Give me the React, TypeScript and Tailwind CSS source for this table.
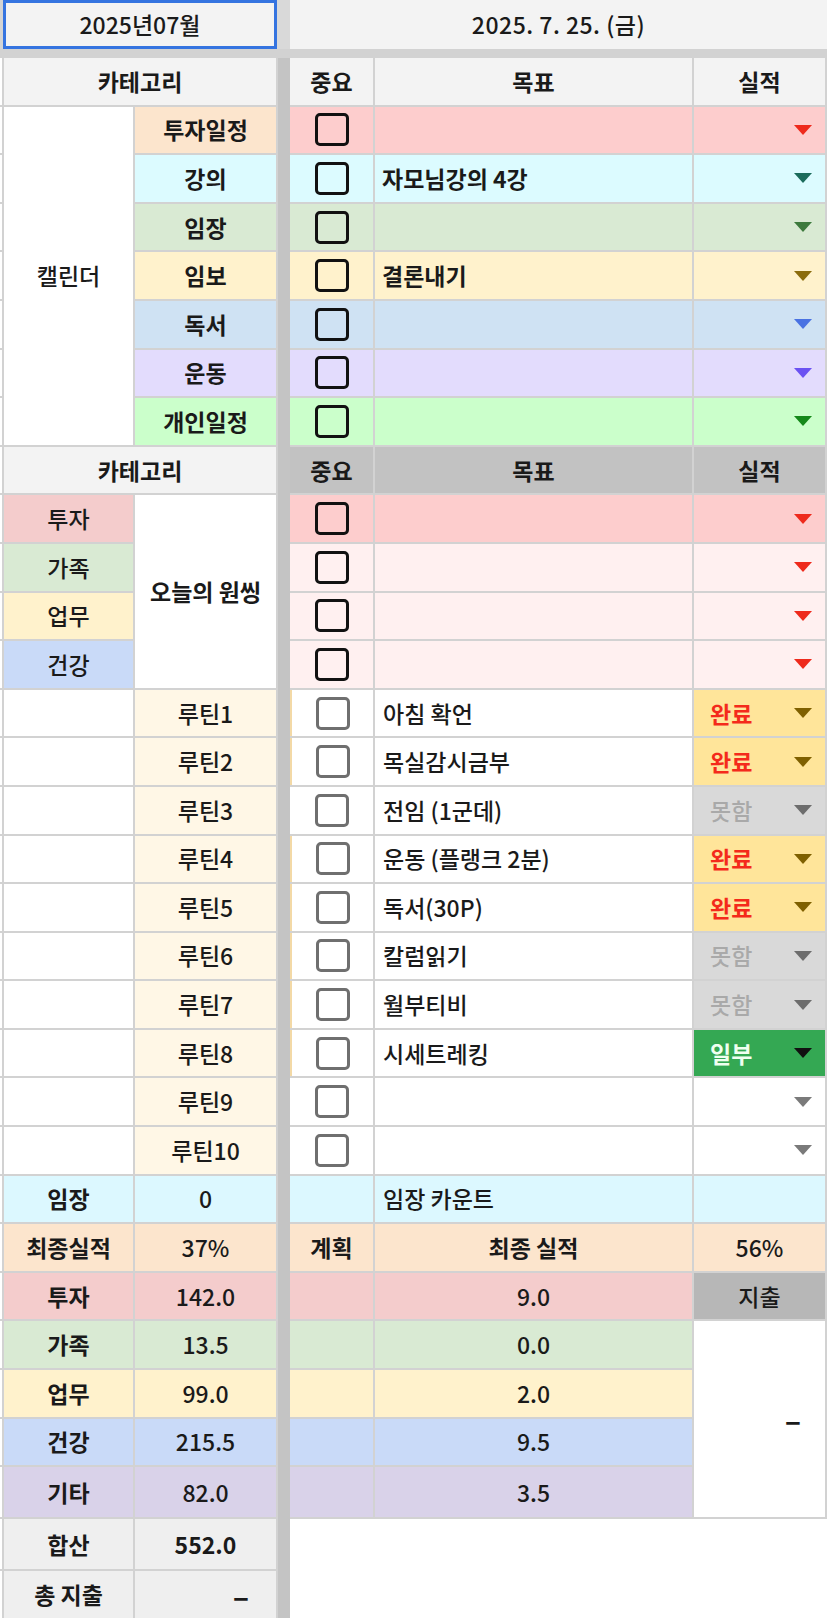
import { Fragment, type ReactNode } from "react";

type Status = "done" | "miss" | "part" | "";

const calendar = [
  { label: "투자일정", cat: "bg-[#fce5cd]", row: "bg-[#fdcdcd]", arrow: "#ee2a1c", goal: "" },
  { label: "강의", cat: "bg-[#dcfbff]", row: "bg-[#dcfbff]", arrow: "#1b6b5b", goal: "자모님강의 4강" },
  { label: "임장", cat: "bg-[#d9ead3]", row: "bg-[#d9ead3]", arrow: "#3d7a3d", goal: "" },
  { label: "임보", cat: "bg-[#fff2cc]", row: "bg-[#fff2cc]", arrow: "#8b6c0c", goal: "결론내기" },
  { label: "독서", cat: "bg-[#cfe2f3]", row: "bg-[#cfe2f3]", arrow: "#4a72e2", goal: "" },
  { label: "운동", cat: "bg-[#e3dcfd]", row: "bg-[#e3dcfd]", arrow: "#6b52f2", goal: "" },
  { label: "개인일정", cat: "bg-[#cbffcb]", row: "bg-[#cbffcb]", arrow: "#15891a", goal: "" },
];

const oneThing = [
  { label: "투자", cat: "bg-[#f4cccc]", row: "bg-[#fdcdcd]" },
  { label: "가족", cat: "bg-[#d9ead3]", row: "bg-[#fff0f0]" },
  { label: "업무", cat: "bg-[#fff2cc]", row: "bg-[#fff0f0]" },
  { label: "건강", cat: "bg-[#c9daf8]", row: "bg-[#fff0f0]" },
];

const routines: { text: string; status: Status; mark: boolean }[] = [
  { text: "아침 확언", status: "done", mark: true },
  { text: "목실감시금부", status: "done", mark: true },
  { text: "전임 (1군데)", status: "miss", mark: false },
  { text: "운동 (플랭크 2분)", status: "done", mark: true },
  { text: "독서(30P)", status: "done", mark: true },
  { text: "칼럼읽기", status: "miss", mark: true },
  { text: "월부티비", status: "miss", mark: true },
  { text: "시세트레킹", status: "part", mark: true },
  { text: "", status: "", mark: false },
  { text: "", status: "", mark: false },
];

const totals = [
  { label: "투자", sum: "142.0", real: "9.0", bg: "bg-[#f4cccc]" },
  { label: "가족", sum: "13.5", real: "0.0", bg: "bg-[#d9ead3]" },
  { label: "업무", sum: "99.0", real: "2.0", bg: "bg-[#fff2cc]" },
  { label: "건강", sum: "215.5", real: "9.5", bg: "bg-[#c9daf8]" },
  { label: "기타", sum: "82.0", real: "3.5", bg: "bg-[#d9d2e9]" },
];

function Arrow({ color }: { color: string }) {
  return (
    <svg width="18" height="10" viewBox="0 0 18 10" className="shrink-0">
      <path d="M0 0H18L9 10Z" fill={color} />
    </svg>
  );
}

function Box({ soft }: { soft?: boolean }) {
  if (soft) {
    return <div className="h-[33px] w-[34px] rounded-[5px] border-[3px] border-[#6f6f6f] bg-white" />;
  }
  return <div className="h-[33px] w-[34px] rounded-[5px] border-[3.5px] border-[#111]" />;
}

function Cell({
  className = "",
  align = "justify-center",
  children,
}: {
  className?: string;
  align?: string;
  children?: ReactNode;
}) {
  return (
    <div className={`flex items-center overflow-hidden whitespace-nowrap ${align} ${className}`}>
      {children}
    </div>
  );
}

function StatusCell({ status }: { status: Status }) {
  if (status === "done")
    return (
      <Cell align="justify-between" className="border-r-2 border-[#d2d2d2] bg-[#ffe59a] pl-[16px] pr-[13px]">
        <span className="font-bold text-[#f42a1b]">완료</span>
        <Arrow color="#7f6000" />
      </Cell>
    );
  if (status === "miss")
    return (
      <Cell align="justify-between" className="border-r-2 border-[#d2d2d2] bg-[#d9d9d9] pl-[16px] pr-[13px]">
        <span className="text-[#a9a9a9]">못함</span>
        <Arrow color="#6d6d6d" />
      </Cell>
    );
  if (status === "part")
    return (
      <Cell align="justify-between" className="border-r-2 border-[#d2d2d2] bg-[#34a853] pl-[16px] pr-[13px]">
        <span className="font-bold text-[#effff0]">일부</span>
        <Arrow color="#111111" />
      </Cell>
    );
  return (
    <Cell align="justify-end" className="border-r-2 border-[#d2d2d2] bg-white pr-[13px]">
      <Arrow color="#7a7a7a" />
    </Cell>
  );
}

function Sliver() {
  return <div className="bg-white" />;
}

function Dash() {
  return <span className="text-[30px] font-bold">–</span>;
}

export default function App() {
  return (
    <div className="h-[1620px] w-[827px] overflow-hidden bg-white font-['Noto_Sans_CJK_KR','Noto_Sans',sans-serif] text-[23px] font-medium leading-none text-[#1a1a1a]">
      {/* frozen header row */}
      <div className="flex h-[49px]">
        <div className="w-[3px] bg-[#d4d4d4]" />
        <div className="flex w-[274px] items-center justify-center border-[3px] border-[#3574e0] bg-[#f3f3f3]">
          2025년07월
        </div>
        <div className="w-[13px] bg-[#d9d9d9]" />
        <div className="flex flex-1 items-center justify-center bg-[#f3f3f3] tracking-[0.5px]">2025. 7. 25. (금)</div>
      </div>
      <div className="h-[9px] bg-[#d2d2d2]" />

      <div className="flex">
        {/* left side: categories */}
        <div className="grid w-[276px] grid-cols-[2px_129px_141px] grid-rows-[repeat(29,46.6px)_50px_50px_47px] gap-[2px] bg-[#d2d2d2]">
          <Sliver />
          <Cell className="col-span-2 bg-[#f3f3f3] font-bold">카테고리</Cell>
          {calendar.map((c, i) => (
            <Fragment key={c.label}>
              <Sliver />
              {i === 0 && <Cell className="row-span-7 bg-white">캘린더</Cell>}
              <Cell className={`${c.cat} font-bold`}>{c.label}</Cell>
            </Fragment>
          ))}

          <Sliver />
          <Cell className="col-span-2 bg-[#f3f3f3] font-bold">카테고리</Cell>
          {oneThing.map((c, i) => (
            <Fragment key={c.label}>
              <Sliver />
              <Cell className={c.cat}>{c.label}</Cell>
              {i === 0 && <Cell className="row-span-4 bg-white font-bold">오늘의 원씽</Cell>}
            </Fragment>
          ))}

          {routines.map((r, i) => (
            <Fragment key={i}>
              <Sliver />
              <div className="bg-white" />
              <Cell className="bg-[#fff7e6]">루틴{i + 1}</Cell>
            </Fragment>
          ))}

          <Sliver />
          <Cell className="bg-[#dcf8ff] font-bold">임장</Cell>
          <Cell className="bg-[#dcf8ff]">0</Cell>

          <Sliver />
          <Cell className="bg-[#fce5cd] font-bold">최종실적</Cell>
          <Cell className="bg-[#fce5cd]">37%</Cell>

          {totals.map((t) => (
            <Fragment key={t.label}>
              <Sliver />
              <Cell className={`${t.bg} font-bold`}>{t.label}</Cell>
              <Cell className={t.bg}>{t.sum}</Cell>
            </Fragment>
          ))}

          <Sliver />
          <Cell className="bg-[#efefef] font-bold">합산</Cell>
          <Cell className="bg-[#efefef] font-bold">552.0</Cell>

          <Sliver />
          <Cell className="bg-[#efefef] font-bold">총 지출</Cell>
          <Cell align="justify-end" className="bg-[#efefef] pr-[27px]">
            <Dash />
          </Cell>
        </div>

        {/* frozen column bar */}
        <div className="w-[14px] border-l-2 border-[#d2d2d2] bg-[#c4c4c4]" />

        {/* right side: goals */}
        <div className="grid w-[537px] grid-cols-[83px_317px_133px] grid-rows-[repeat(29,46.6px)_50px_50px_47px] gap-[2px] bg-[#d2d2d2]">
          <Cell className="bg-[#f3f3f3] font-bold">중요</Cell>
          <Cell className="bg-[#f3f3f3] font-bold">목표</Cell>
          <Cell className="border-r-2 border-[#d2d2d2] bg-[#f3f3f3] font-bold">실적</Cell>

          {calendar.map((c) => (
            <Fragment key={c.label}>
              <Cell className={c.row}>
                <Box />
              </Cell>
              <Cell align="justify-start" className={`${c.row} pl-[7px] font-bold`}>
                {c.goal}
              </Cell>
              <Cell align="justify-end" className={`${c.row} border-r-2 border-[#d2d2d2] pr-[13px]`}>
                <Arrow color={c.arrow} />
              </Cell>
            </Fragment>
          ))}

          <Cell className="bg-[#c2c2c2] font-bold">중요</Cell>
          <Cell className="bg-[#c2c2c2] font-bold">목표</Cell>
          <Cell className="border-r-2 border-[#d2d2d2] bg-[#c2c2c2] font-bold">실적</Cell>

          {oneThing.map((c) => (
            <Fragment key={c.label}>
              <Cell className={c.row}>
                <Box />
              </Cell>
              <div className={c.row} />
              <Cell align="justify-end" className={`${c.row} border-r-2 border-[#d2d2d2] pr-[13px]`}>
                <Arrow color="#ee2a1c" />
              </Cell>
            </Fragment>
          ))}

          {routines.map((r, i) => (
            <Fragment key={i}>
              <Cell className={r.mark ? "border-l-2 border-[#f3d9a6] bg-white" : "bg-white"}>
                <Box soft />
              </Cell>
              <Cell align="justify-start" className="bg-white pl-[8px]">
                {r.text}
              </Cell>
              <StatusCell status={r.status} />
            </Fragment>
          ))}

          <div className="bg-[#dcf8ff]" />
          <Cell align="justify-start" className="bg-[#dcf8ff] pl-[8px]">
            임장 카운트
          </Cell>
          <div className="border-r-2 border-[#d2d2d2] bg-[#dcf8ff]" />

          <Cell className="bg-[#fce5cd] font-bold">계획</Cell>
          <Cell className="bg-[#fce5cd] font-bold">최종 실적</Cell>
          <Cell className="border-r-2 border-[#d2d2d2] bg-[#fce5cd]">56%</Cell>

          {totals.map((t, i) => (
            <Fragment key={t.label}>
              <div className={t.bg} />
              <Cell className={t.bg}>{t.real}</Cell>
              {i === 0 && <Cell className="border-r-2 border-[#d2d2d2] bg-[#b7b7b7]">지출</Cell>}
              {i === 1 && (
                <Cell align="justify-end" className="row-span-4 border-r-2 border-[#d2d2d2] bg-white pr-[24px]">
                  <Dash />
                </Cell>
              )}
            </Fragment>
          ))}

          <div className="col-span-3 row-span-2 bg-white" />
        </div>
      </div>
    </div>
  );
}
